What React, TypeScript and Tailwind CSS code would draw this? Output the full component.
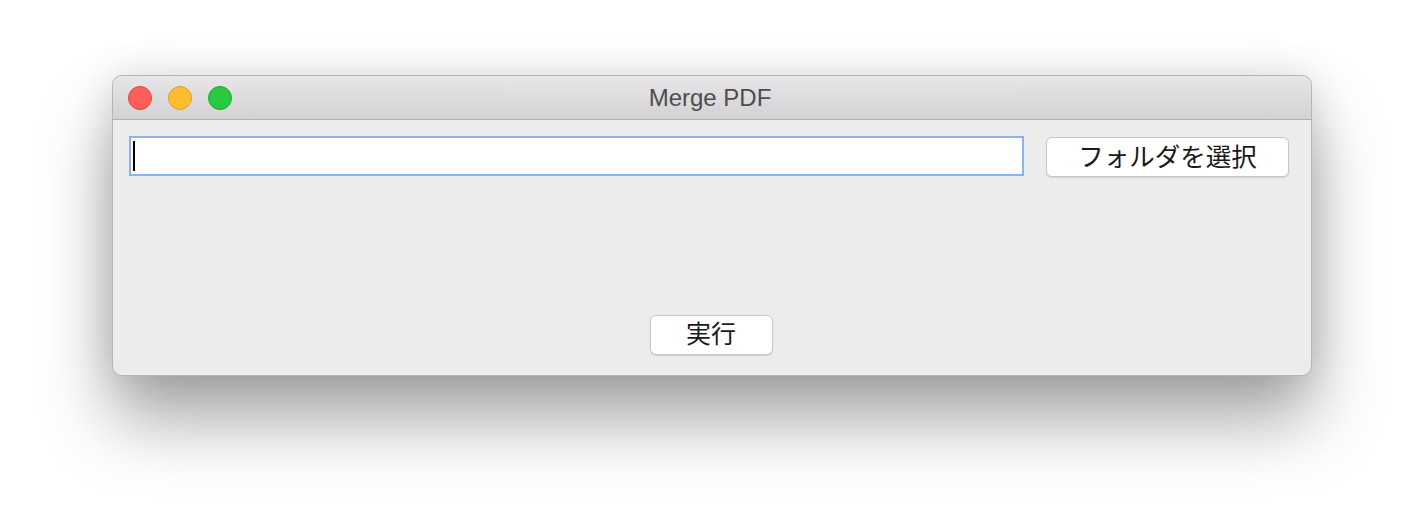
export default function App() {
  return (
    <div className="w-[1424px] h-[524px] bg-white flex justify-center pt-[75px]" style={{ fontFamily: '"Liberation Sans", "Noto Sans CJK JP", sans-serif' }}>
      <div className="w-[1200px] h-[301px] flex flex-col rounded-[10px] bg-[#ececec] border border-[#b5b5b5] shadow-[0_44px_70px_rgba(0,0,0,0.35),0_0_40px_rgba(0,0,0,0.12)] overflow-hidden">
        {/* Title bar */}
        <div className="h-[44px] shrink-0 relative flex items-center bg-gradient-to-b from-[#e8e6e8] to-[#d3d1d3] border-b border-[#b1b1b1]">
          <div className="flex gap-[16px] pl-[15px]">
            <span className="w-[24px] h-[24px] rounded-full bg-[#fe5f57] border border-[#e0443e]" />
            <span className="w-[24px] h-[24px] rounded-full bg-[#febc2e] border border-[#dea123]" />
            <span className="w-[24px] h-[24px] rounded-full bg-[#28c840] border border-[#1aab29]" />
          </div>
          <div className="absolute inset-0 flex items-center justify-center pr-[4px] text-[24px] text-[#4d4d4d]">Merge PDF</div>
        </div>
        {/* Body */}
        <div className="flex-1 flex flex-col px-[16px] pt-[15px] pb-[20px]">
          <div className="flex items-center gap-[22px]">
            <div className="w-[895px] h-[40px] bg-white border-2 border-[#8ab4f0] flex items-center pl-[2px]">
              <span className="w-[2px] h-[30px] bg-black" />
            </div>
            <button className="w-[243px] h-[40px] mt-[2px] bg-white rounded-[6px] border border-[#c8c8c8] shadow-[0_1px_1px_rgba(0,0,0,0.12)] text-[25.5px] text-[#1a1a1a] flex items-center justify-center">
              フォルダを選択
            </button>
          </div>
          <div className="flex-1" />
          <div className="flex justify-center pr-[2px]">
            <button className="w-[123px] h-[40px] bg-white rounded-[6px] border border-[#c8c8c8] shadow-[0_1px_1px_rgba(0,0,0,0.12)] text-[25px] text-[#1a1a1a] flex items-center justify-center">
              実行
            </button>
          </div>
        </div>
      </div>
    </div>
  )
}
